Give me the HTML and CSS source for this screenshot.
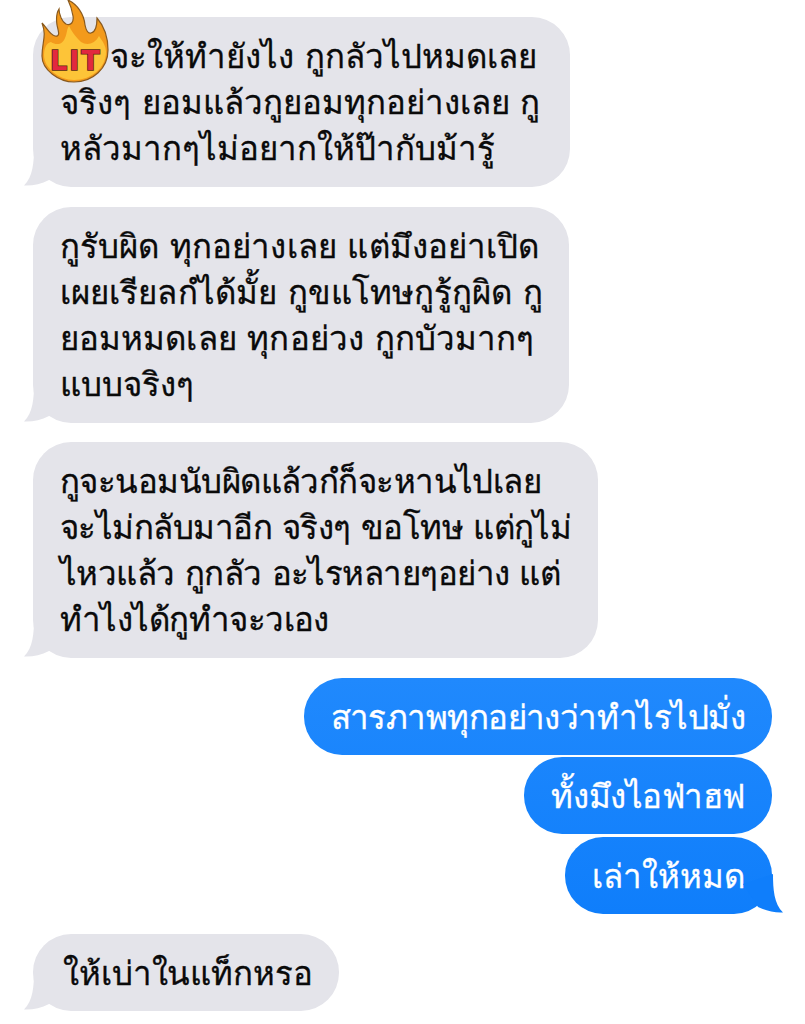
FILE: index.html
```html
<!DOCTYPE html>
<html lang="th">
<head>
<meta charset="utf-8">
<title>Messages</title>
<link rel="stylesheet" href="styles.css">
</head>
<body>
<main class="thread">
  <div class="msg in first">
    <svg class="tail" width="40" height="40" viewBox="0 0 40 40"><path d="M10 0C10 15 9 30 0 38.5C8 39 17 37 25 33L40 10Z"/></svg>
    <p>จะให้ทำยังไง กูกลัวไปหมดเลย<br>จริงๆ ยอมแล้วกูยอมทุกอย่างเลย กู<br>หลัวมากๆไม่อยากให้ป๊ากับม้ารู้</p>
    <svg class="lit" width="68" height="83" viewBox="0 0 68 83">
      <path class="f-out" d="M1 23C6 28 9 35 14 36C20 37 17 30 16 25C15 18 16 12 18 9C18 14 21 22 25 24C30 26 33 22 32 16C31 10 29 4 27 0C36 4 43 14 44 25C45 30 47 34 50 33C55 32 56 25 56 18C63 26 67 38 67 50C67 68 52 82 33 82C18 82 1 70 1 56C1 42 6 36 1 23Z"/>
      <path class="f-in" d="M3 55C3 45 8 42 10 42C16 46 22 44 24 38C26 34 26 28 28 26C32 34 36 38 40 42C46 46 54 44 58 36C62 42 65 46 65 52C65 68 50 80 33 80C18 80 3 68 3 55Z"/>
      <text class="lit-text" x="9" y="70">LIT</text>
    </svg>
  </div>
  <div class="msg in second">
    <svg class="tail" width="40" height="40" viewBox="0 0 40 40"><path d="M10 0C10 15 9 30 0 38.5C8 39 17 37 25 33L40 10Z"/></svg>
    <p>กูรับผิด ทุกอย่างเลย แต่มึงอย่าเปิด<br>เผยเรียลกํได้มั้ย กูขแโทษกูรู้กูผิด กู<br>ยอมหมดเลย ทุกอย่วง กูกบัวมากๆ<br>แบบจริงๆ</p>
  </div>
  <div class="msg in third">
    <svg class="tail" width="40" height="40" viewBox="0 0 40 40"><path d="M10 0C10 15 9 30 0 38.5C8 39 17 37 25 33L40 10Z"/></svg>
    <p>กูจะนอมนับผิดแล้วกํก็จะหานไปเลย<br>จะไม่กลับมาอีก จริงๆ ขอโทษ แต่กูไม่<br>ไหวแล้ว กูกลัว อะไรหลายๆอย่าง แต่<br>ทำไงได้กูทำจะวเอง</p>
  </div>
  <div class="msg out o1">
    <p>สารภาพทุกอย่างว่าทำไรไปมั่ง</p>
  </div>
  <div class="msg out o2">
    <p>ทั้งมึงไอฟ่าฮฟ</p>
  </div>
  <div class="msg out o3">
    <p>เล่าให้หมด</p>
    <svg class="tail-out" width="40" height="40" viewBox="0 0 40 40"><path d="M30 0C30 15 31 30 40 38.5C32 39 23 37 15 33L0 10Z"/></svg>
  </div>
  <div class="msg in final">
    <svg class="tail" width="40" height="40" viewBox="0 0 40 40"><path d="M10 0C10 15 9 30 0 38.5C8 39 17 37 25 33L40 10Z"/></svg>
    <p>ให้เบ่าในแท็กหรอ</p>
  </div>
</main>
</body>
</html>
```
FILE: styles.css
```css
html, body { margin: 0; padding: 0; background: #fff; }
body { width: 805px; height: 1024px; overflow: hidden; font-family: "Noto Sans", "Liberation Sans", "DejaVu Sans", sans-serif; }
.thread { display: flex; flex-direction: column; padding: 17px 33px 0; }
.msg { position: relative; align-self: flex-start; border-radius: 38px; }
.msg p { margin: 0; padding: 16px 27px; font-size: 33px; line-height: 46px; white-space: nowrap; position: relative; word-spacing: 2px; -webkit-text-stroke: 0.3px currentColor; }
.in { background: #e4e4ea; color: #0a0a0a; }
.out { align-self: flex-end; background: linear-gradient(#2089fd 678px, #0f7efb 914px) fixed; color: #fff; }
.first p { text-indent: 50px; padding-right: 30px; }
.second { margin-top: 20px; }
.second p { padding-right: 26px; letter-spacing: 0.08px; }
.third { margin-top: 19px; }
.third p { letter-spacing: -0.55px; }
.o1 { margin-top: 20px; }
.o1 p, .o2 p, .o3 p, .final p { padding-top: 15.5px; padding-bottom: 15.5px; }
.o1 p { letter-spacing: -0.55px; }
.o2 p { letter-spacing: -0.45px; }
.o2 { margin-top: 2px; }
.o3 { margin-top: 3px; }
.final { margin-top: 20px; }
.final p { padding-left: 30px; padding-right: 26px; letter-spacing: -0.1px; }
.tail { position: absolute; left: -9px; bottom: 0; fill: #e4e4ea; }
.tail-out { position: absolute; right: -11px; bottom: 0; fill: #0f7efb; }
.lit { position: absolute; left: 8px; top: -17px; }
.f-out { fill: #f39a1c; stroke: #8a5a1e; stroke-width: 1.2; }
.f-in { fill: #fdc438; }
.lit-text { font-family: "DejaVu Sans", sans-serif; font-weight: 700; font-size: 27px; letter-spacing: 2px; fill: #e2283f; stroke: #5a2412; stroke-width: 1.6; paint-order: stroke; }
```
